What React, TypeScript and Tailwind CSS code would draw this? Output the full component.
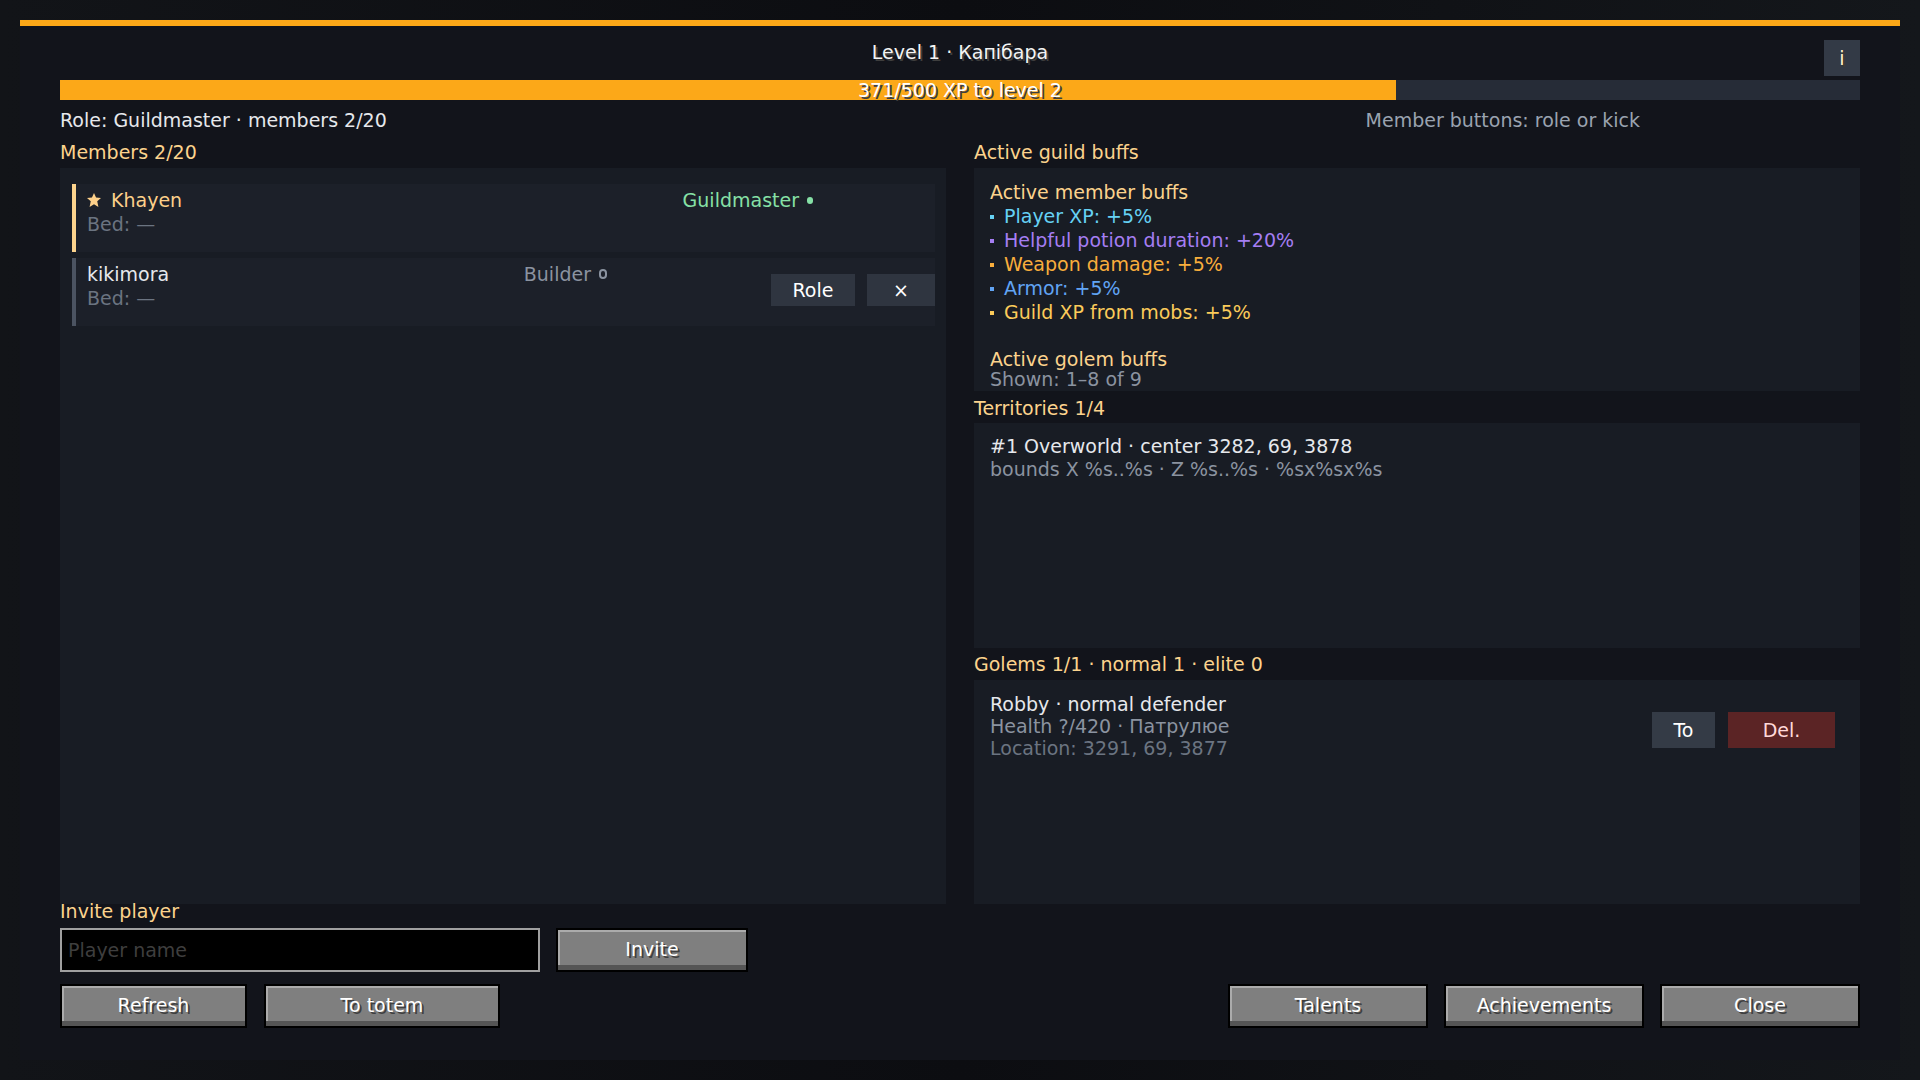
import React from 'react';

type Buff = { label: string; color: string };

const memberBuffs: Buff[] = [
  { label: 'Player XP: +5%', color: 'text-[#66d1f4]' },
  { label: 'Helpful potion duration: +20%', color: 'text-[#a57ef3]' },
  { label: 'Weapon damage: +5%', color: 'text-[#f9ae3c]' },
  { label: 'Armor: +5%', color: 'text-[#61a4f4]' },
  { label: 'Guild XP from mobs: +5%', color: 'text-[#fbcb5a]' },
];

const xp = { current: 371, needed: 500 };

// vanilla-style gui button: dark outline, light top/left edge, dark bottom lip
const McButton = ({ label, className }: { label: string; className: string }) => (
  <button
    className={`flex h-11 shrink-0 items-center justify-center border-2 border-black bg-[#7f7f7f] pb-[3px] text-white shadow-[inset_0_-5px_0_#555555,inset_2px_2px_0_#ababab] [text-shadow:2px_2px_0_#3f3f3f] ${className}`}
  >
    {label}
  </button>
);

const Star = () => (
  <svg width="14" height="14" viewBox="0 0 13 13" className="shrink-0">
    <path d="M6.5 0 L8.4 4.2 L13 4.6 L9.5 7.6 L10.6 13 L6.5 10.4 L2.4 13 L3.5 7.6 L0 4.6 L4.6 4.2 Z" fill="#fdd08a" />
  </svg>
);

const SectionTitle = ({ children }: { children: React.ReactNode }) => (
  <div className="text-[#fcd38d]">{children}</div>
);

export default function App() {
  const pct = (xp.current / xp.needed) * 100;

  return (
    <div className="h-screen w-full bg-gradient-to-r from-[#121418] via-[#0c0d11] to-[#14171b] p-5 font-['DejaVu_Sans',sans-serif] text-[19px] leading-[18px] text-[#e6e8ec]">
      <div className="flex h-full flex-col border-t-[6px] border-[#fca818] bg-[#12141b] px-10 pb-8">
        {/* header */}
        <div className="flex items-start pt-[14px]">
          <div className="w-9" />
          <div className="flex-1 pt-[3px] text-center text-[#f4f4f4] [text-shadow:2px_2px_0_#3e3e3e]">
            Level 1 · Капібара
          </div>
          <button className="flex h-9 w-9 items-center justify-center bg-[#333a46] text-[#fff1cc] [text-shadow:2px_2px_0_#3f3c33]">
            i
          </button>
        </div>

        <div className="relative mt-1 h-5 bg-[#262c37]">
          <div className="h-full bg-[#fca818]" style={{ width: `${pct}%` }} />
          <div className="absolute inset-0 flex items-center justify-center text-white [text-shadow:2px_2px_0_#3f3f3f]">
            {xp.current}/{xp.needed} XP to level 2
          </div>
        </div>

        <div className="mt-[11px] flex justify-between pr-[220px]">
          <span>Role: Guildmaster · members 2/20</span>
          <span className="text-[#9aa3b0]">Member buttons: role or kick</span>
        </div>

        {/* columns */}
        <div className="mt-[14px] grid min-h-0 flex-1 grid-cols-2 gap-7">
          <div className="flex min-h-0 flex-col">
            <SectionTitle>Members 2/20</SectionTitle>
            <div className="mt-[7px] flex flex-1 flex-col gap-1.5 bg-[#181c24] pb-3 pl-3 pr-[11px] pt-4">
              <div className="flex h-[68px] border-l-4 border-[#fcd38d] bg-[#1c2029] pl-[11px] leading-[24px]">
                <div className="flex-1 pt-1">
                  <div className="flex items-center gap-[10px] text-[#fdd08a]">
                    <Star />
                    Khayen
                  </div>
                  <div className="text-[#6b7481]">Bed: —</div>
                </div>
                <div className="flex items-center gap-2 self-start pt-1 text-[#86e0a6]">
                  Guildmaster
                  <span className="h-[7px] w-[6px] rounded-full bg-current" />
                </div>
                <div className="w-[122px]" />
              </div>

              <div className="flex h-[68px] border-l-4 border-[#4b5361] bg-[#1c2029] pl-[11px] leading-[24px]">
                <div className="flex-1 pt-1">
                  <div>kikimora</div>
                  <div className="text-[#6b7481]">Bed: —</div>
                </div>
                <div className="flex items-center gap-2 self-start pt-1 text-[#8b93a0]">
                  Builder
                  <span className="h-[10px] w-[8px] rounded-full border-2 border-current" />
                </div>
                <div className="w-[164px]" />
                <div className="flex items-center gap-3 pb-1">
                  <button className="flex h-8 w-[84px] items-center justify-center bg-[#2f3540] text-white">Role</button>
                  <button className="flex h-8 w-[68px] items-center justify-center bg-[#2f3540] text-white">×</button>
                </div>
              </div>
            </div>
          </div>

          <div className="flex min-h-0 flex-col">
            <SectionTitle>Active guild buffs</SectionTitle>
            <div className="mt-[7px] flex min-h-0 flex-1 flex-col">
              <div className="flex-1 bg-[#181c24] px-4 pt-3 leading-[24px]">
                <div className="text-[#fcd38d]">Active member buffs</div>
                {memberBuffs.map((b) => (
                  <div key={b.label} className={`flex items-center ${b.color}`}>
                    <span className="mr-[10px] mt-[2px] h-1 w-1 bg-current" />
                    {b.label}
                  </div>
                ))}
                <div className="mt-[26px] leading-[18px] text-[#fcd38d]">Active golem buffs</div>
                <div className="mt-[2px] leading-[18px] text-[#8b93a0]">Shown: 1–8 of 9</div>
              </div>

              <div className="mb-1.5 mt-2">
                <SectionTitle>Territories 1/4</SectionTitle>
              </div>
              <div className="flex-1 bg-[#181c24] px-4 pt-[14px]">
                <div>#1 Overworld · center 3282, 69, 3878</div>
                <div className="mt-[5px] text-[#8b93a0]">bounds X %s..%s · Z %s..%s · %sx%sx%s</div>
              </div>

              <div className="my-[7px]">
                <SectionTitle>Golems 1/1 · normal 1 · elite 0</SectionTitle>
              </div>
              <div className="flex flex-1 items-start bg-[#181c24] pl-4 pr-[25px] pt-[13px] leading-[22px]">
                <div className="flex-1">
                  <div>Robby · normal defender</div>
                  <div className="text-[#8b93a0]">Health ?/420 · Патрулюе</div>
                  <div className="text-[#6b7481]">Location: 3291, 69, 3877</div>
                </div>
                <div className="mt-[19px] flex gap-[13px]">
                  <button className="flex h-9 w-[63px] items-center justify-center bg-[#343b46] text-white">To</button>
                  <button className="flex h-9 w-[107px] items-center justify-center bg-[#5b2425] text-[#ffd9d9]">Del.</button>
                </div>
              </div>
            </div>
          </div>
        </div>

        {/* invite + actions */}
        <div className="-mt-[2px] text-[#fcd38d]">Invite player</div>
        <div className="mt-2 flex gap-4">
          <input
            placeholder="Player name"
            className="h-11 w-[480px] border-2 border-[#a0a0a0] bg-black px-1.5 text-white outline-none placeholder:text-[#3e3e3e]"
          />
          <McButton label="Invite" className="w-[192px]" />
        </div>
        <div className="mt-3 flex justify-between">
          <div className="flex gap-[17px]">
            <McButton label="Refresh" className="w-[187px]" />
            <McButton label="To totem" className="w-[236px]" />
          </div>
          <div className="flex gap-4">
            <McButton label="Talents" className="w-[200px]" />
            <McButton label="Achievements" className="w-[200px]" />
            <McButton label="Close" className="w-[200px]" />
          </div>
        </div>
      </div>
    </div>
  );
}
